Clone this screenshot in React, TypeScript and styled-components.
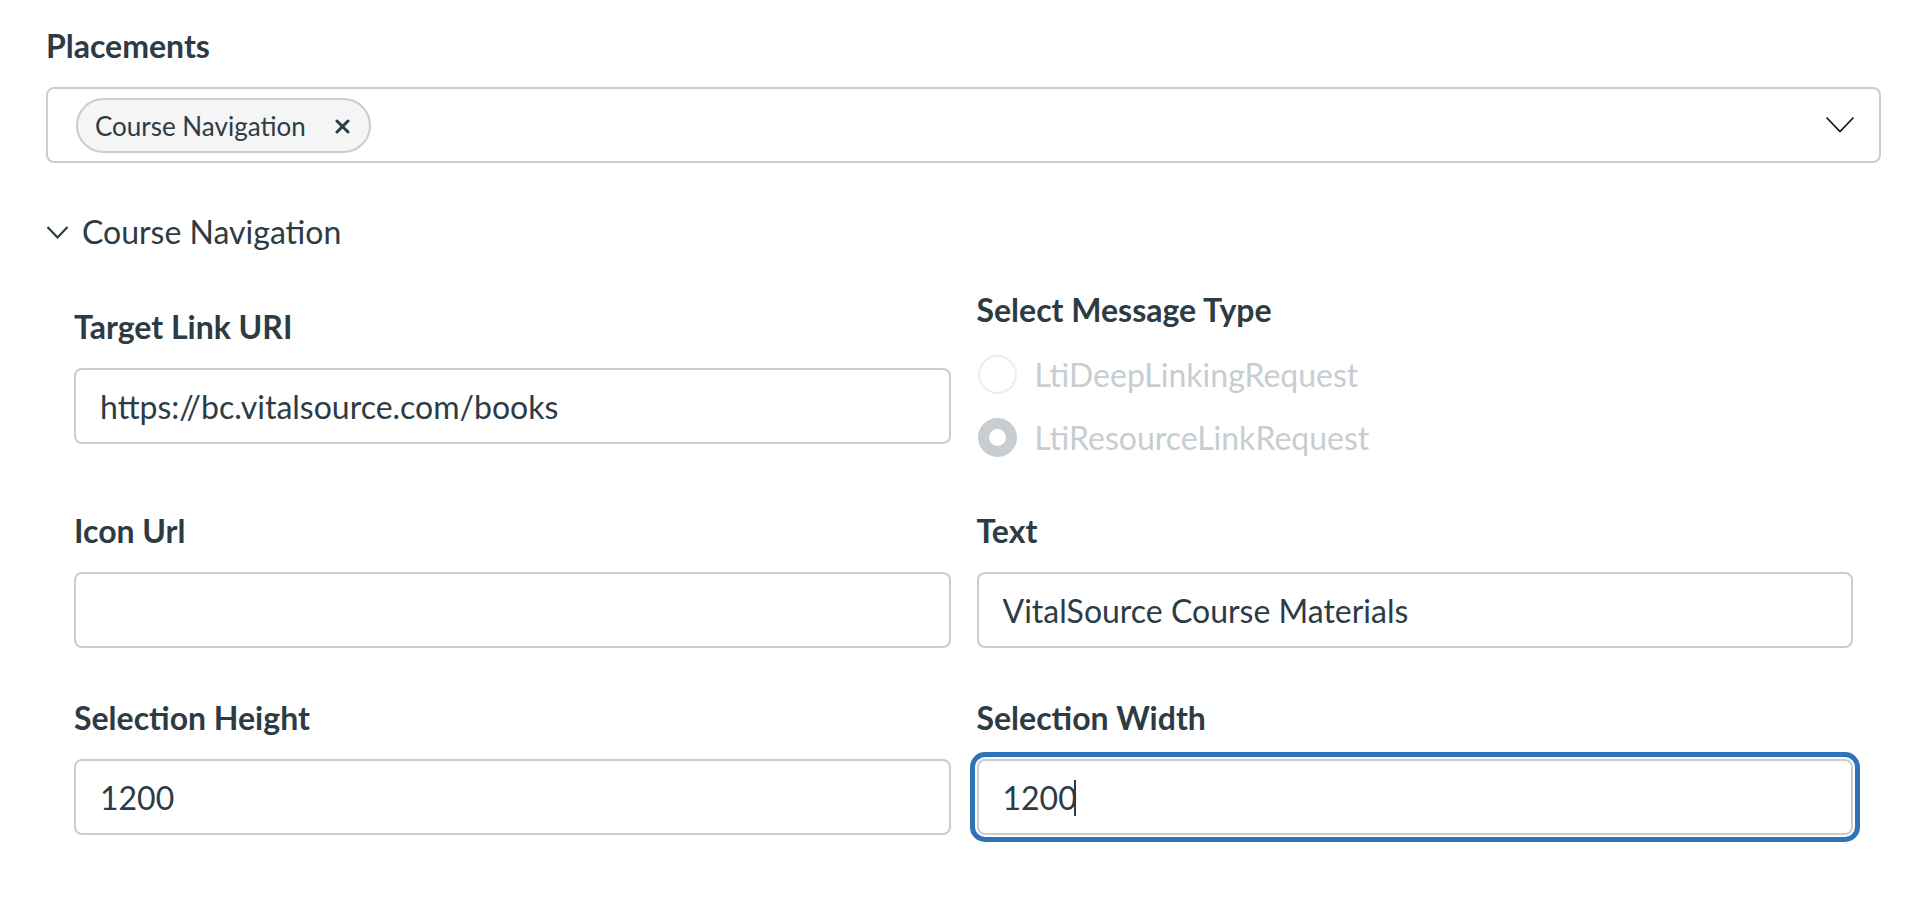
import React from 'react'
import styled, { createGlobalStyle } from 'styled-components'

const GlobalStyle = createGlobalStyle`
  body {
    margin: 0;
    background: #ffffff;
    font-family: Lato, "Noto Sans", "Liberation Sans", sans-serif;
    color: #2d3b45;
  }
  * {
    box-sizing: border-box;
  }
`

const Page = styled.div`
  padding: 26px 29px 60px 46px;
`

const FieldLabel = styled.label`
  display: block;
  font-size: 32px;
  line-height: 40px;
  font-weight: 700;
  margin-bottom: 21px;
`

const MultiSelect = styled.div`
  display: flex;
  align-items: center;
  height: 76px;
  padding: 0 24px 0 28px;
  border: 2px solid #c7cdd1;
  border-radius: 8px;
`

const Chip = styled.span`
  display: inline-flex;
  align-items: center;
  gap: 29px;
  height: 55px;
  padding: 2px 19px 0 17px;
  background: #f5f5f5;
  border: 2px solid #c7cdd1;
  border-radius: 28px;
  font-size: 26px;
  line-height: 1;
`

const SelectArrow = styled.span`
  display: flex;
  margin-left: auto;
`

const Toggle = styled.div`
  display: flex;
  align-items: center;
  gap: 13px;
  margin-top: 49px;
  font-size: 32px;
  line-height: 40px;
`

const Fields = styled.div`
  display: flex;
  flex-direction: column;
  gap: 50px;
  padding: 38px 28px 0;
`

const Row = styled.div`
  display: grid;
  grid-template-columns: 1fr 1fr;
  column-gap: 26px;
  align-items: center;
`

const InputWrap = styled.div`
  position: relative;
`

const TextInput = styled.input<{ $focused?: boolean }>`
  display: block;
  width: 100%;
  height: 76px;
  padding: 0 24px;
  border: 2px solid #c7cdd1;
  border-radius: 8px;
  font-family: inherit;
  font-size: 32px;
  color: #2d3b45;
  background: #fff;
  outline: ${(p) => (p.$focused ? '5px solid #2f72b5' : 'none')};
  outline-offset: 2px;
`

const Caret = styled.span`
  position: absolute;
  left: 97px;
  top: 21px;
  width: 2px;
  height: 36px;
  background: #2d3b45;
`

const RadioGroup = styled.fieldset`
  margin: 0;
  padding: 0;
  border: none;
  display: flex;
  flex-direction: column;
  gap: 15px;
`

const Legend = styled.legend`
  padding: 0;
  font-size: 32px;
  line-height: 40px;
  font-weight: 700;
  margin-bottom: 20px;
`

const RadioRow = styled.label`
  display: flex;
  align-items: center;
  gap: 18px;
  height: 48px;
  font-size: 32px;
  color: #c7cdd1;
`

const RadioDot = styled.span<{ $checked?: boolean }>`
  width: 39px;
  height: 39px;
  border-radius: 50%;
  background: #fff;
  border: ${(p) => (p.$checked ? '11px solid #c7cdd1' : '2px solid #ebedee')};
  margin-left: 1px;
`

function TextField({ label, value, focused }: { label: string; value: string; focused?: boolean }) {
  return (
    <div>
      <FieldLabel>{label}</FieldLabel>
      <InputWrap>
        <TextInput value={value} readOnly $focused={focused} />
        {focused && <Caret />}
      </InputWrap>
    </div>
  )
}

export default function App() {
  return (
    <Page>
      <GlobalStyle />
      <FieldLabel>Placements</FieldLabel>
      <MultiSelect>
        <Chip>
          Course Navigation
          <svg width="15" height="15" viewBox="0 0 15 15">
            <path d="M2 2 L13 13 M13 2 L2 13" stroke="#2d3b45" strokeWidth="3" strokeLinecap="round" />
          </svg>
        </Chip>
        <SelectArrow>
          <svg width="30" height="18" viewBox="0 0 30 18">
            <path d="M1.5 1.5 L15 15.5 L28.5 1.5" fill="none" stroke="#111" strokeWidth="1.6" />
          </svg>
        </SelectArrow>
      </MultiSelect>

      <Toggle>
        <svg width="23" height="15" viewBox="0 0 23 15">
          <path d="M1.5 2 L11.5 12.5 L21.5 2" fill="none" stroke="#2d3b45" strokeWidth="2.2" />
        </svg>
        Course Navigation
      </Toggle>

      <Fields>
        <Row>
          <TextField label="Target Link URI" value="https://bc.vitalsource.com/books" />
          <RadioGroup>
            <Legend>Select Message Type</Legend>
            <RadioRow>
              <RadioDot />
              LtiDeepLinkingRequest
            </RadioRow>
            <RadioRow>
              <RadioDot $checked />
              LtiResourceLinkRequest
            </RadioRow>
          </RadioGroup>
        </Row>
        <Row>
          <TextField label="Icon Url" value="" />
          <TextField label="Text" value="VitalSource Course Materials" />
        </Row>
        <Row>
          <TextField label="Selection Height" value="1200" />
          <TextField label="Selection Width" value="1200" focused />
        </Row>
      </Fields>
    </Page>
  )
}
